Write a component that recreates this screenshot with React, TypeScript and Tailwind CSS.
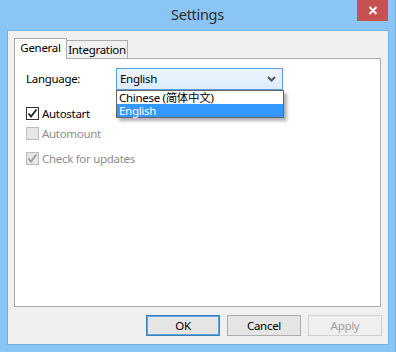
import { useState } from 'react';

const font = { fontFamily: '"Noto Sans", "Noto Sans CJK SC", sans-serif' };

function Check({ color }: { color: string }) {
  return (
    <svg width="11" height="11" viewBox="0 0 11 11">
      <path d="M1.5 5.5 L4 8.5 L9.5 1.5" fill="none" stroke={color} strokeWidth="1.8" />
    </svg>
  );
}

function CheckRow({ label, checked, disabled }: { label: string; checked?: boolean; disabled?: boolean }) {
  return (
    <div className="flex items-center gap-[3px] h-[13px]">
      <div
        className={`w-[13px] h-[13px] border flex items-center justify-center ${
          disabled ? 'border-[#bcbcbc] bg-[#e6e6e6]' : 'border-[#333] bg-white'
        }`}
      >
        {checked && <Check color={disabled ? '#9a9a9a' : '#222'} />}
      </div>
      <span className={`text-[11.5px] tracking-[-0.3px] leading-none ${disabled ? 'text-[#8d8d8d]' : 'text-black'}`}>
        {label}
      </span>
    </div>
  );
}

export default function App() {
  const [tab, setTab] = useState('general');

  return (
    <div className="w-[396px] h-[352px] bg-[#8bc5f6] border-r border-[#73afe6] flex flex-col" style={font}>
      {/* Title bar */}
      <div className="relative h-[30px] flex items-center justify-center">
        <span className="text-[14.5px] tracking-[-0.3px] text-[#2b2b2b] -mt-[1px]">Settings</span>
        <div className="absolute right-[7px] top-0 w-[31px] h-[21px] bg-[#c75050] flex items-center justify-center">
          <svg width="10" height="9" viewBox="0 0 10 9">
            <path d="M1.5 1 L8.5 8 M8.5 1 L1.5 8" stroke="white" strokeWidth="2" />
          </svg>
        </div>
      </div>

      {/* Client area */}
      <div className="ml-[7px] mr-[6px] h-[315px] border border-[#74b0e2] bg-[#f0f0f0] flex flex-col px-[6px] pt-[7px]">
        {/* Tabs */}
        <div className="flex items-end h-[20px] text-[11.5px] tracking-[-0.3px]">
          <button
            onClick={() => setTab('general')}
            className={`w-[53px] h-[21px] border border-b-0 border-[#acacac] relative z-10 -mb-[1px] leading-none pb-[2px] ${
              tab === 'general' ? 'bg-white' : 'bg-[#f0f0f0]'
            }`}
          >
            General
          </button>
          <button
            onClick={() => setTab('integration')}
            className="w-[61px] h-[18px] border border-l-0 border-b-0 border-[#acacac] bg-[#f0f0f0] leading-none"
          >
            Integration
          </button>
        </div>

        {/* Tab panel */}
        <div className="relative h-[249px] w-[367px] border border-[#acacac] bg-white px-[11px] pt-[9px]">
          <div className="flex items-center h-[22px]">
            <span className="w-[90px] text-[11.5px] tracking-[-0.3px] text-black">Language:</span>
            <div className="relative">
              <div className="w-[167px] h-[22px] border border-[#569de5] bg-gradient-to-b from-[#ecf4fc] to-[#dcecfc] flex items-center justify-between pl-[3px] pr-[6px]">
                <span className="text-[11.5px] tracking-[-0.3px] text-black">English</span>
                <svg width="9" height="6" viewBox="0 0 9 6">
                  <path d="M1 1 L4.5 4.5 L8 1" fill="none" stroke="#555" strokeWidth="2" />
                </svg>
              </div>
              {/* Dropdown list */}
              <div className="absolute left-0 top-[22px] w-[168px] border border-[#646464] bg-white shadow-[3px_3px_3px_rgba(0,0,0,0.3)] z-20 text-[11.5px] tracking-[-0.3px]">
                <div className="h-[13px] leading-[13px] pl-[2px] text-black whitespace-nowrap overflow-hidden">Chinese (简体中文)</div>
                <div className="h-[13px] leading-[13px] pl-[2px] bg-[#3399ff] text-white">English</div>
              </div>
            </div>
          </div>

          <div className="mt-[17px] flex flex-col">
            <CheckRow label="Autostart" checked />
            <div className="h-[7px]" />
            <CheckRow label="Automount" disabled />
            <div className="h-[12px]" />
            <CheckRow label="Check for updates" checked disabled />
          </div>
        </div>

        {/* Buttons */}
        <div className="flex justify-end gap-[7px] mt-[8px] text-[11.5px] tracking-[-0.3px]">
          <button className="w-[74px] h-[21px] border border-[#3c7fb1] bg-[#e5e5e5] shadow-[inset_0_0_0_1px_#5ea6e8] text-black">
            OK
          </button>
          <button className="w-[74px] h-[21px] border border-[#acacac] bg-[#e5e5e5] text-black">Cancel</button>
          <button className="w-[74px] h-[21px] border border-[#d2d2d2] bg-[#efefef] text-[#a0a0a0]">Apply</button>
        </div>
      </div>
    </div>
  );
}
